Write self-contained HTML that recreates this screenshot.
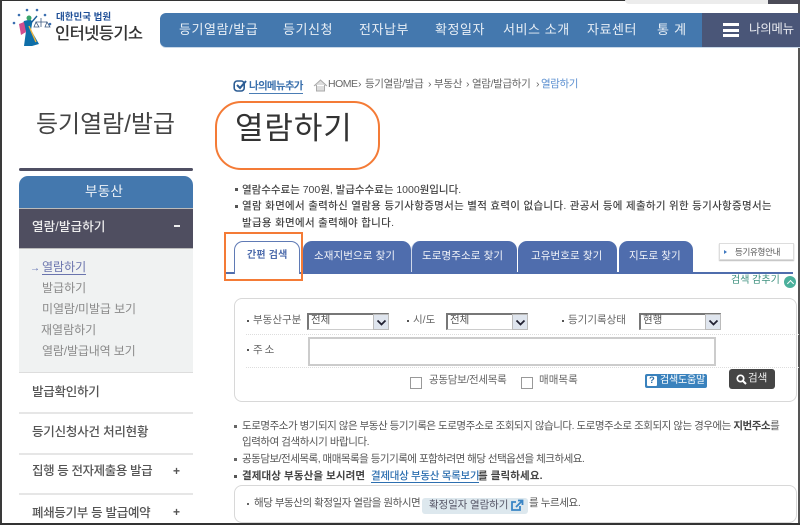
<!DOCTYPE html>
<html lang="ko"><head><meta charset="utf-8"><title>열람하기</title>
<style>
html,body{margin:0;padding:0;width:800px;height:525px;overflow:hidden;background:#fff}
#p{position:relative;width:800px;height:525px;overflow:hidden;font-family:"Liberation Sans","Noto Sans CJK KR",sans-serif;color:#444;filter:blur(.35px)}
#p div,#p span.a,#p svg{position:absolute}
.t{position:absolute;white-space:nowrap;line-height:1}
.nav{color:#e8eff6;font-size:13px;top:23px;letter-spacing:.55px}
.sub{color:#8a8a8a;font-size:12px;left:42px}
.side{color:#555;font-size:12.5px;font-weight:500;left:32px;letter-spacing:-.25px}
.ln{left:19px;width:174px;height:2px;background:#e6e6e6}
.tab{top:241px;height:31px;background:#4f6dad;border-radius:9px 9px 0 0}
.tabt{top:251px;color:#f2f4f9;font-size:10.5px;letter-spacing:.1px}
.note{color:#444;font-size:10.5px;font-weight:500}
.nb{color:#555;font-size:10.5px}
.lab{color:#666;font-size:10.5px}
.sel{top:313px;height:17px;background:#fff;border:1px solid #ccc;border-left:2px solid #777;border-top:2px solid #777;box-sizing:border-box;color:#555;font-size:10.5px;padding-left:2px;line-height:11px}
.arr{top:314px;width:16px;height:16px;background:#dfe5ee;border:1px solid #bbb;box-sizing:border-box}
.dot{left:246px;width:607px;border-top:1px dotted #ddd;height:0}
.bc{top:79px;font-size:10.5px;color:#666;letter-spacing:-.5px}
</style></head><body><div id="p">
<div style="left:0;top:0;width:800px;height:1px;background:#333"></div>
<div style="left:0;top:0;width:2px;height:525px;background:#3a3a3a"></div>
<div style="left:798px;top:0;width:2px;height:525px;background:#555"></div>
<div style="left:0;top:523px;width:800px;height:2px;background:#333"></div>
<div style="left:625px;top:0;width:143px;height:4px;background:#ececec;border-radius:0 0 0 5px"></div>
<div style="left:768px;top:0;width:32px;height:4px;background:#4b4b57"></div>

<svg style="left:8px;top:6px" width="46" height="42" viewBox="0 0 46 42">
<g fill="#3b6fb0"><circle cx="6" cy="17" r="1.300"/><circle cx="11" cy="9" r="1.300"/><circle cx="19" cy="4" r="1.300"/><circle cx="29" cy="4" r="1.300"/><circle cx="37" cy="9" r="1.300"/><circle cx="42" cy="18" r="1.300"/></g>
<path d="M20 14c3-1 5 1 4 4l-1 6 8 14-7 2h-8l2-15-5-4 3-6z" fill="#0e6ea8"/>
<path d="M16 16l-5 2 2 11 5-3z" fill="#d14d8e"/>
<path d="M23 17l6-7" stroke="#1a5e99" stroke-width="1.400"/>
<path d="M21 20l7 16" stroke="#f0b43c" stroke-width="1.400"/>
<circle cx="21" cy="12" r="2.500" fill="#39a56a"/>
<path d="M28 16h11M33 12v9M28 16l-2 5h5zM39 16l-2 5h5z" stroke="#3d5a80" stroke-width=".8" fill="none"/>
</svg>
<span class="t" style="left:56px;top:13px;font-size:9.5px;font-weight:700;color:#1f4f97">대한민국 법원</span>
<span class="t" style="left:55px;top:26px;font-size:16.500px;font-weight:500;color:#333;letter-spacing:-.6px">인터넷등기소</span>

<div style="left:160px;top:13px;width:640px;height:34px;background:#4478ae;border-radius:6px 0 0 6px;box-shadow:0 1px 0 #c9d8e8"></div>
<div style="left:702px;top:13px;width:98px;height:34px;background:#4a5678"></div>
<span class="t nav" style="left:179px">등기열람/발급</span>
<span class="t nav" style="left:283px">등기신청</span>
<span class="t nav" style="left:359px">전자납부</span>
<span class="t nav" style="left:435px">확정일자</span>
<span class="t nav" style="left:503px">서비스 소개</span>
<span class="t nav" style="left:587px">자료센터</span>
<span class="t nav" style="left:657px;letter-spacing:.8px">통 계</span>
<div style="left:723px;top:23px;width:16px;height:3px;background:#fff"></div>
<div style="left:723px;top:29px;width:16px;height:3px;background:#fff"></div>
<div style="left:723px;top:34px;width:16px;height:3px;background:#fff"></div>
<span class="t" style="left:749px;top:23px;color:#e8eaf0;font-size:12.5px;letter-spacing:-.3px">나의메뉴</span>

<svg style="left:233px;top:79px" width="15" height="14" viewBox="0 0 15 14"><rect x="1.200" y="2" width="10" height="10" rx="3" fill="none" stroke="#2d5d94" stroke-width="1.600"/><path d="M4 6l3 3 6-7" fill="none" stroke="#2d5d94" stroke-width="2"/></svg>
<span class="t" style="left:249px;top:81px;font-size:10.5px;font-weight:700;color:#3a70ad;letter-spacing:-.7px;border-bottom:1px solid #4a7db5;padding-bottom:1px">나의메뉴추가</span>
<svg style="left:313px;top:79px" width="15" height="13" viewBox="0 0 15 13"><path d="M1 7l6.500-6 6.500 6M3.500 6v6h8V6" fill="#ddd" stroke="#aaa"/></svg>
<span class="t bc" style="left:328px">HOME</span>
<span class="t bc" style="left:358px">›</span>
<span class="t bc" style="left:365px;letter-spacing:-.35px">등기열람/발급</span>
<span class="t bc" style="left:428px">›</span>
<span class="t bc" style="left:434px;letter-spacing:-.3px">부동산</span>
<span class="t bc" style="left:466px">›</span>
<span class="t bc" style="left:472px;letter-spacing:-.35px">열람/발급하기</span>
<span class="t bc" style="left:536px">›</span>
<span class="t" style="left:541px;top:79px;font-size:10.5px;color:#5b8fd0;letter-spacing:-.4px">열람하기</span>

<span class="t" style="left:36px;top:113px;font-size:24px;color:#444;letter-spacing:-.03px">등기열람/발급</span>
<div style="left:19px;top:168px;width:174px;height:3px;background:#4f4f63;border-radius:2px"></div>
<div style="left:19px;top:176px;width:174px;height:32px;background:#4478ae;border-radius:9px 9px 0 0"></div>
<span class="t" style="left:85px;top:185px;font-size:13.5px;color:#eef3f8;letter-spacing:.3px">부동산</span>
<div style="left:19px;top:208px;width:174px;height:41px;background:#4f4e60;border-top:1px solid #bbb;border-bottom:1px solid #bbb;box-sizing:border-box"></div>
<span class="t" style="left:32px;top:221px;font-size:12.5px;font-weight:500;color:#eee;letter-spacing:.15px">열람/발급하기</span>
<div style="left:174px;top:225px;width:6px;height:2px;background:#eee"></div>
<div style="left:19px;top:249px;width:174px;height:123px;background:#f0f2f2;border-bottom:1px solid #ddd"></div>
<span class="t" style="left:30px;top:264px;font-size:10px;color:#5a6bb0">→</span>
<span class="t" style="left:42px;top:261px;font-size:12px;color:#6a74ad;border-bottom:1px solid #6a74ad;padding-bottom:1px">열람하기</span>
<span class="t sub" style="top:282px">발급하기</span>
<span class="t sub" style="top:303px;letter-spacing:-.1px">미열람/미발급 보기</span>
<span class="t sub" style="top:324px;left:41px">재열람하기</span>
<span class="t sub" style="top:345px;letter-spacing:-.15px">열람/발급내역 보기</span>
<span class="t side" style="top:386px">발급확인하기</span>
<div class="ln" style="top:412px"></div>
<span class="t side" style="top:426px;letter-spacing:-.2px">등기신청사건 처리현황</span>
<div class="ln" style="top:453px"></div>
<span class="t side" style="top:465px;letter-spacing:-.4px">집행 등 전자제출용 발급</span>
<span class="t" style="left:173px;top:465px;font-size:12px;font-weight:700;color:#555">+</span>
<div class="ln" style="top:493px"></div>
<span class="t side" style="top:507px;letter-spacing:-.3px">폐쇄등기부 등 발급예약</span>
<span class="t" style="left:173px;top:506px;font-size:12px;font-weight:700;color:#555">+</span>

<div style="left:215px;top:101px;width:165px;height:69px;box-sizing:border-box;border:2px solid #f47b36;border-radius:26px"></div>
<span class="t" style="left:235px;top:113px;font-size:31px;color:#333;letter-spacing:.9px">열람하기</span>

<div style="left:235px;top:188px;width:3px;height:3px;background:#555"></div>
<span class="t note" style="left:242px;top:185px;letter-spacing:-.02px">열람수수료는 700원, 발급수수료는 1000원입니다.</span>
<div style="left:235px;top:205px;width:3px;height:3px;background:#555"></div>
<span class="t note" style="left:242px;top:201px;letter-spacing:.3px">열람 화면에서 출력하신 열람용 등기사항증명서는 별적 효력이 없습니다. 관공서 등에 제출하기 위한 등기사항증명서는</span>
<span class="t note" style="left:242px;top:218px;letter-spacing:.3px">발급용 화면에서 출력해야 합니다.</span>

<div style="left:224px;top:272px;width:569px;height:2px;background:#4f6dad"></div>
<div style="left:234px;top:241px;width:66px;height:33px;background:#fff;border:1.500px solid #5f7ab5;border-bottom:none;border-radius:9px 9px 0 0;box-sizing:border-box"></div>
<span class="t" style="left:247px;top:251px;font-size:10px;color:#4f6dad;font-weight:700;letter-spacing:.2px">간편 검색</span>
<div class="tab" style="left:303px;width:108px"></div>
<div class="tab" style="left:411px;width:105px;border-left:1px solid #cfd8ea"></div>
<div class="tab" style="left:518px;width:99px"></div>
<div class="tab" style="left:619px;width:74px"></div>
<span class="t tabt" style="left:314px">소재지번으로 찾기</span>
<span class="t tabt" style="left:422px">도로명주소로 찾기</span>
<span class="t tabt" style="left:531px">고유번호로 찾기</span>
<span class="t tabt" style="left:629px">지도로 찾기</span>
<div style="left:224px;top:232px;width:79px;height:49px;box-sizing:border-box;border:2px solid #f47b36"></div>
<div style="left:719px;top:243px;width:75px;height:17px;background:#fff;border:1px solid #ddd;box-shadow:0 1px 1px #bbb;box-sizing:border-box"></div>
<div style="left:724px;top:250px;border-left:3px solid #3f78c0;border-top:2px solid transparent;border-bottom:2px solid transparent"></div>
<span class="t" style="left:735px;top:248px;font-size:8.5px;color:#555;letter-spacing:-.3px">등기유형안내</span>
<span class="t" style="left:731px;top:276px;font-size:10px;color:#3f917f">검색 감추기</span>
<div style="left:784px;top:276px;width:12px;height:12px;border-radius:50%;background:#4bb09c"></div>
<div style="left:788px;top:281px;width:4px;height:4px;border-left:1px solid #fff;border-top:1px solid #fff;transform:rotate(45deg)"></div>

<div style="left:234px;top:298px;width:563px;height:104px;box-sizing:border-box;border:1.500px solid #d8d8d8;border-radius:8px;background:#fff"></div>
<div class="dot" style="top:334px"></div>
<div class="dot" style="top:367px"></div>
<div style="left:247px;top:320px;width:2px;height:2px;background:#555"></div>
<span class="t lab" style="left:253px;top:315px">부동산구분</span>
<div class="sel" style="left:307px;width:82px;">전체</div>
<div class="arr" style="left:373px"></div>
<svg style="left:376px;top:319px" width="11" height="8"><path d="M1.500 1.500l4 4 4-4" fill="none" stroke="#223" stroke-width="1.800"/></svg>
<div style="left:407px;top:320px;width:2px;height:2px;background:#555"></div>
<span class="t lab" style="left:413px;top:315px">시/도</span>
<div class="sel" style="left:446px;width:82px;">전체</div>
<div class="arr" style="left:512px"></div>
<svg style="left:515px;top:319px" width="11" height="8"><path d="M1.500 1.500l4 4 4-4" fill="none" stroke="#223" stroke-width="1.800"/></svg>
<div style="left:562px;top:320px;width:2px;height:2px;background:#555"></div>
<span class="t lab" style="left:568px;top:315px">등기기록상태</span>
<div class="sel" style="left:639px;width:82px;">현행</div>
<div class="arr" style="left:705px"></div>
<svg style="left:708px;top:319px" width="11" height="8"><path d="M1.500 1.500l4 4 4-4" fill="none" stroke="#223" stroke-width="1.800"/></svg>
<div style="left:247px;top:349px;width:2px;height:2px;background:#555"></div>
<span class="t lab" style="left:253px;top:345px;letter-spacing:2px">주소</span>
<div style="left:308px;top:337px;width:408px;height:29px;box-sizing:border-box;border:2px solid #ccc;background:#fff"></div>
<div style="left:410px;top:377px;width:10px;height:10px;border:1px solid #999;background:#fff"></div>
<span class="t lab" style="left:429px;top:375px;letter-spacing:-.3px">공동담보/전세목록</span>
<div style="left:521px;top:377px;width:10px;height:10px;border:1px solid #999;background:#fff"></div>
<span class="t lab" style="left:539px;top:375px;letter-spacing:.05px">매매목록</span>
<div style="left:645px;top:374px;width:62px;height:14px;background:#3a82bd;border-radius:2px"></div>
<div style="left:647px;top:376px;width:10px;height:10px;background:#fff;border-radius:1px"></div>
<span class="t" style="left:649px;top:376px;font-size:9.5px;font-weight:700;color:#2d70a8">?</span>
<span class="t" style="left:660px;top:376px;font-size:10px;color:#fff;letter-spacing:-.2px">검색도움말</span>
<div style="left:729px;top:369px;width:46px;height:20px;background:#454545;border-radius:3px"></div>
<svg style="left:736px;top:374px" width="11" height="11"><circle cx="4.500" cy="4.500" r="3.200" fill="none" stroke="#fff" stroke-width="1.700"/><path d="M7 7l3 3" stroke="#fff" stroke-width="2"/></svg>
<span class="t" style="left:748px;top:373px;font-size:10.5px;color:#eee">검색</span>

<div style="left:234px;top:425px;width:3px;height:3px;background:#666"></div>
<span class="t nb" style="left:242px;top:421px;letter-spacing:-.47px">도로명주소가 병기되지 않은 부동산 등기기록은 도로명주소로 조회되지 않습니다. 도로명주소로 조회되지 않는 경우에는 <b style="color:#444">지번주소</b>를</span>
<span class="t nb" style="left:242px;top:437px;letter-spacing:-.45px">입력하여 검색하시기 바랍니다.</span>
<div style="left:234px;top:458px;width:3px;height:3px;background:#666"></div>
<span class="t nb" style="left:242px;top:454px;letter-spacing:-.5px">공동담보/전세목록, 매매목록을 등기기록에 포함하려면 해당 선택옵션을 체크하세요.</span>
<div style="left:234px;top:475px;width:3px;height:3px;background:#555"></div>
<span class="t" style="left:242px;top:471px;font-size:10.5px;font-weight:700;color:#444;letter-spacing:.1px">결제대상 부동산을 보시려면</span>
<span class="t" style="left:371px;top:471px;font-size:10.5px;color:#2d6fb0;font-weight:500;letter-spacing:-.3px;border-bottom:1px solid #2d6fb0">결제대상 부동산 목록보기</span>
<span class="t" style="left:478px;top:471px;font-size:10.5px;font-weight:700;color:#444;letter-spacing:.1px">를 클릭하세요.</span>

<div style="left:234px;top:485px;width:563px;height:38px;box-sizing:border-box;border:1.500px solid #d8d8d8;border-radius:8px;background:#fff"></div>
<div style="left:247px;top:503px;width:2px;height:2px;background:#666"></div>
<span class="t nb" style="left:254px;top:498px;letter-spacing:-.46px">해당 부동산의 확정일자 열람을 원하시면</span>
<div style="left:422px;top:498px;width:106px;height:16px;background:#dde8ee;border-radius:3px"></div>
<span class="t" style="left:429px;top:500px;font-size:10.5px;color:#556;letter-spacing:-.1px">확정일자 열람하기</span>
<svg style="left:510px;top:499px" width="14" height="13"><path d="M6 3H2v8h8V7" fill="none" stroke="#3a85c5" stroke-width="1.800"/><path d="M6 8l6-6M8 1.500h4.500V6" fill="none" stroke="#3a85c5" stroke-width="1.800"/></svg>
<span class="t nb" style="left:529px;top:498px;letter-spacing:-.4px">를 누르세요.</span>
</div></body></html>
